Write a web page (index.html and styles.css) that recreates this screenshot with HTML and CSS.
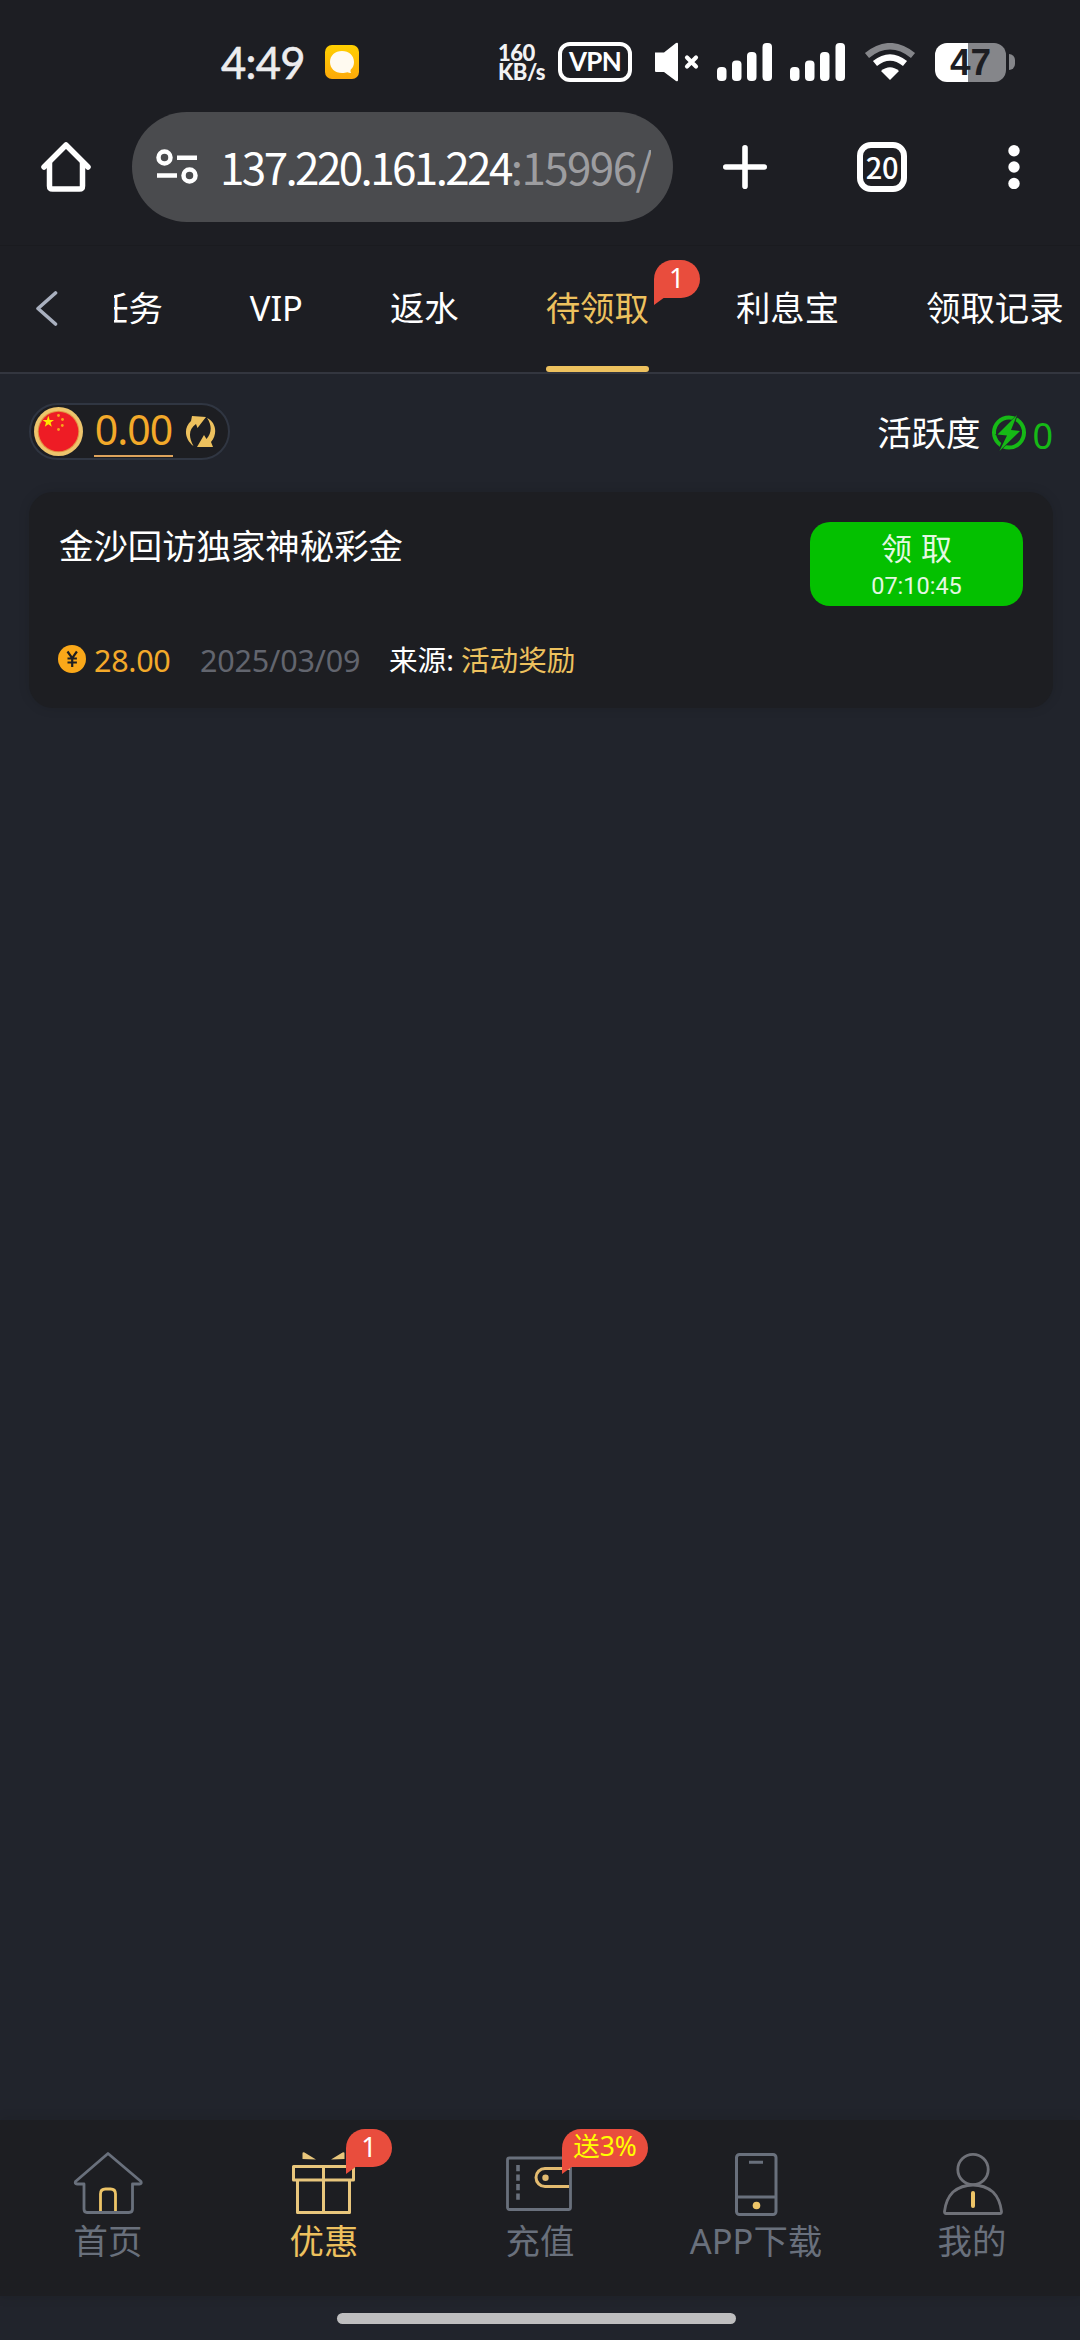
FILE: index.html
```html
<!DOCTYPE html>
<html lang="zh-CN">
<head>
<meta charset="utf-8">
<title>待领取</title>
<link rel="stylesheet" href="styles.css">
</head>
<body>
<div class="screen">
  <header class="status">
    <span class="clock">4:49</span>
    <svg class="msg" viewBox="0 0 34 34"><defs><linearGradient id="mg" x1="0" y1="0" x2="0" y2="1"><stop offset="0" stop-color="#ffd000"/><stop offset="1" stop-color="#fda90a"/></linearGradient></defs><rect width="34" height="34" rx="7" fill="url(#mg)"/><path d="M17 6C10 6 5 10.500 5 17s5 11 12 11c2 0 4-.2 5.500-.7 1.200.5 2.500.9 3.500.7-.6-1-.6-2.300-.2-3.400C28 22.500 29 20 29 17c0-6.500-5-11-12-11z" fill="#fffaf0"/></svg>
    <span class="speed"><span>160</span><span>KB/s</span></span>
    <span class="vpn">VPN</span>
    <svg class="mute" viewBox="0 0 46 40"><path d="M1 10.500h9L22 1q2-1 2 1v36q0 2-2 1L10 30H2q-1 0-1-1z" fill="#fff"/><path d="M33 15.500l9 9m0-9l-9 9" stroke="#fff" stroke-width="4.200" stroke-linecap="round"/></svg>
    <svg class="signal" viewBox="0 0 55 38" fill="#fff"><rect y="24" width="9.500" height="14" rx="4"/><rect x="15" y="17.500" width="9.500" height="20.500" rx="4"/><rect x="30" y="9" width="9.500" height="29" rx="4"/><rect x="45.500" width="9.500" height="38" rx="4"/></svg>
    <svg class="signal signal-2" viewBox="0 0 55 38" fill="#fff"><rect y="24" width="9.500" height="14" rx="4"/><rect x="15" y="17.500" width="9.500" height="20.500" rx="4"/><rect x="30" y="9" width="9.500" height="29" rx="4"/><rect x="45.500" width="9.500" height="38" rx="4"/></svg>
    <svg class="wifi" viewBox="0 0 52 38" fill="none"><path d="M3 12.500Q26-6 49 12.500" stroke="#85868a" stroke-width="6.500"/><path d="M11 20.500Q26 8.500 41 20.500" stroke="#fff" stroke-width="6.500"/><path d="M17 28Q26 20.500 35 28L26 37z" fill="#fff"/></svg>
    <span class="battery"><span class="battery-body">47</span><span class="battery-nub"></span></span>
  </header>

  <div class="browser">
    <svg class="home" viewBox="0 0 50 50" fill="none" stroke="#fff" stroke-width="5.500" stroke-linecap="round" stroke-linejoin="round"><path d="M3 25L25 3l22 22"/><path d="M8.500 21v23q0 3 3 3h27q3 0 3-3V21"/></svg>
    <div class="address">
      <svg class="tune" viewBox="0 0 42 36" fill="none" stroke="#fff" stroke-width="4.500"><circle cx="8.500" cy="8.500" r="6"/><path d="M21 8.700h20M1 26.500h20"/><circle cx="33.500" cy="26.500" r="6"/></svg>
      <span class="url">137.220.161.224<span class="port">:15996/</span></span>
    </div>
    <svg class="plus" viewBox="0 0 44 44"><path d="M22 2.800v38.400M2.800 22h38.400" stroke="#fff" stroke-width="5.600" stroke-linecap="round"/></svg>
    <span class="tabcount">20</span>
    <svg class="dots" viewBox="0 0 12 44" fill="#fff"><circle cx="6" cy="5.700" r="5.700"/><circle cx="6" cy="22" r="5.700"/><circle cx="6" cy="38.500" r="5.700"/></svg>
  </div>

  <nav class="tabs">
    <svg class="back" viewBox="0 0 22 35" fill="none" stroke="#a9b0bf" stroke-width="3.600" stroke-linecap="round" stroke-linejoin="round"><path d="M19.500 2L2 17.500 19.500 33"/></svg>
    <div class="tablist">
      <span class="tab">任务</span>
      <span class="tab">VIP</span>
      <span class="tab">返水</span>
      <span class="tab active">待领取<span class="bubble tab-bubble">1</span></span>
      <span class="tab">利息宝</span>
      <span class="tab">领取记录</span>
    </div>
  </nav>

  <main class="content">
    <div class="summary">
      <div class="balance">
        <svg class="flag" viewBox="0 0 49 49"><circle cx="24.500" cy="24.500" r="24.500" fill="#edc56d"/><circle cx="24.500" cy="24.500" r="20.800" fill="#e49142"/><circle cx="24.500" cy="24.500" r="19.800" fill="#ee1c25"/><path d="M14.300 8.800l1.400 4.100 4.300.1-3.400 2.600 1.200 4.200-3.500-2.500-3.500 2.500 1.200-4.200L8.600 13l4.300-.1z" fill="#ffe600"/><g fill="#f9a51b"><circle cx="24.500" cy="8.500" r="1.400"/><circle cx="28.500" cy="12.500" r="1.400"/><circle cx="28.300" cy="18.500" r="1.400"/><circle cx="24.500" cy="22.500" r="1.400"/></g></svg>
        <span class="amount">0.00</span>
        <svg class="refresh" viewBox="0 0 32 34" fill="#edc15e"><path d="M7 1l14 1-8.500 11-1.500-4C4 14 3 21 8.500 31 0 25-2 13 6 6z"/><path d="M22 3c9 4 11 16 4 24l2 5H12l7-12 2.500 4C27 18 27 10 22 3z"/></svg>
      </div>
      <div class="activity">
        <span>活跃度</span>
        <svg class="bolt" viewBox="0 0 36 36"><circle cx="18" cy="17.500" r="15" fill="none" stroke="#16b916" stroke-width="4"/><path d="M27-1L4 20l9 1-7 18L31 15l-9-1z" fill="#21242c"/><path d="M26 0L6.500 19.500l9.500 1L8.500 36 29 16 20 15z" fill="#16b916"/></svg>
        <span class="points">0</span>
      </div>
    </div>

    <article class="card">
      <div class="card-top">
        <h2 class="title">金沙回访独家神秘彩金</h2>
        <button class="claim"><span class="claim-text">领 取</span><span class="countdown">07:10:45</span></button>
      </div>
      <div class="meta">
        <svg class="yen" viewBox="0 0 28 28"><circle cx="14" cy="14" r="14" fill="#faa819"/><path d="M9.500 6.500l4.700 6.700 4.700-6.700M14.200 13v9M9.500 13.500h9.400M9.500 17.500h9.400" fill="none" stroke="#1d1e22" stroke-width="2.200"/></svg>
        <span class="bonus">28.00</span>
        <span class="date">2025/03/09</span>
        <span class="source">来源: </span><span class="kind">活动奖励</span>
      </div>
    </article>
  </main>

  <nav class="bottom">
    <a class="item">
      <svg class="icon" viewBox="0 0 72 72" fill="none" stroke="#69707c" stroke-width="2.800" stroke-linejoin="round"><path d="M36 6.500L3.500 34.500q-1 2.500 1.500 2.500h7v25q0 3.500 3 3.500h42q3.500 0 3.500-3.500V37h7q2.500 0 1.500-2.500z"/><path d="M28.500 64V47q0-5 5-5h5q5 0 5 5v17" stroke="#edc467"/></svg>
      <span>首页</span>
    </a>
    <a class="item on">
      <svg class="icon" viewBox="0 0 72 72" fill="none" stroke="#e8c67c" stroke-width="3" stroke-linejoin="round"><path d="M5.500 19.500h60V33h-60zM9.500 33h52v32.500h-52zM35.500 19.500v46"/><path d="M14.500 12V6.500q0-2 2-1L28 12.500zM56.500 12V6.500q0-2-2-1L43 12.500z" fill="#e8c67c" stroke="none"/></svg>
      <span>优惠</span>
      <span class="bubble nav-bubble">1</span>
    </a>
    <a class="item">
      <svg class="icon" viewBox="0 0 72 72" fill="none" stroke="#69707c" stroke-width="2.800"><rect x="3.500" y="11" width="63" height="51.500" rx="2"/><path d="M14 18v36" stroke-width="3.600" stroke-dasharray="6.300 3.200"/><path d="M65 39.500H41a9 9 0 0 1 0-18h25" stroke="#e3bb70" stroke-width="3"/><circle cx="41.500" cy="30.700" r="3.200" fill="#e3bb70" stroke="none"/></svg>
      <span>充值</span>
      <span class="bubble nav-bubble promo">送3%</span>
    </a>
    <a class="item">
      <svg class="icon" viewBox="0 0 72 72" fill="none" stroke="#69707c" stroke-width="3"><rect x="16.500" y="7.500" width="39.500" height="60" rx="3"/><path d="M17 50h39M29 15.200h14"/><circle cx="36.500" cy="58.500" r="3.800" fill="#edc467" stroke="none"/></svg>
      <span>APP下载</span>
    </a>
    <a class="item">
      <svg class="icon" viewBox="0 0 72 72" fill="none" stroke="#6f7178" stroke-width="2.800" stroke-linejoin="round"><circle cx="37" cy="22.500" r="15.200"/><path d="M10 66.500q-1.500 0-1.500-2Q10 52 17 45q8.500-7 20-7t20 7q7 7 8.500 19.500 0 2-1.500 2z"/><path d="M37 46v13" stroke="#edc467" stroke-width="4" stroke-linecap="round"/></svg>
      <span>我的</span>
    </a>
  </nav>
  <footer class="gesture"><span class="handle"></span></footer>
</div>
</body>
</html>
```
FILE: styles.css
```css
* { box-sizing: border-box; }
body { margin: 0; background: #21242c; }
svg { display: block; flex: none; }
.screen {
  width: 1080px; height: 2340px; overflow: hidden;
  display: flex; flex-direction: column;
  background: #21242c; color: #fff;
  font-family: "Noto Sans", "Noto Sans CJK SC", sans-serif;
  font-size: 34.4px; line-height: 44px; white-space: nowrap;
}

/* status bar */
.status {
  flex: none; height: 112px; padding: 12px 0 0 221px;
  display: flex; align-items: center; background: #1d1e23;
}
.clock { width: 104px; font-family: Lato, sans-serif; font-size: 43.5px; letter-spacing: -.7px; color: #ececee; -webkit-text-stroke: .6px #ececee; }
.msg { width: 34px; height: 34px; }
.speed {
  width: 60px; margin-left: 139px; display: flex; flex-direction: column;
  font-family: Lato, sans-serif; font-weight: 900; font-size: 22px; line-height: 19px; letter-spacing: -.5px; color: #f2f2f3;
}
.vpn {
  width: 74px; height: 40px; border: 4px solid #fff; border-radius: 12px;
  font: 700 26px/31px Lato, sans-serif; text-align: center; letter-spacing: -.8px;
}
.mute { width: 46px; height: 40px; margin-left: 22px; }
.signal { width: 55px; height: 38px; margin-left: 17px; }
.signal-2 { margin-left: 18px; }
.wifi { width: 52px; height: 38px; margin-left: 19px; }
.battery { display: flex; align-items: center; gap: 3px; margin-left: 19px; }
.battery-body {
  width: 71px; height: 39px; border-radius: 12px;
  background: linear-gradient(90deg, #fff 47%, #85868a 47%);
  color: #1d1e23; font: 700 37px/39px "Liberation Sans", sans-serif; text-align: center;
}
.battery-nub { width: 6px; height: 16px; border-radius: 0 8px 8px 0; background: #85868a; }

/* browser toolbar */
.browser { flex: none; height: 133px; padding-left: 41px; display: flex; align-items: flex-start; background: #1d1e23; }
.home { width: 50px; height: 50px; margin-top: 30px; }
.address {
  width: 541px; height: 110px; margin-left: 41px; padding-left: 24px; border-radius: 55px;
  background: #4a4b4e; display: flex; align-items: center;
}
.tune { width: 42px; height: 36px; }
.url { width: 431px; margin: -3px 0 0 22px; overflow: hidden; font-family: "Noto Sans CJK SC", sans-serif; font-size: 44px; line-height: 66px; letter-spacing: -2.600px; }
.port { color: #9d9da0; letter-spacing: -1.600px; }
.plus { width: 44px; height: 44px; margin: 33px 0 0 50px; }
.tabcount {
  width: 50px; height: 50px; margin: 30px 0 0 90px; border: 6px solid #fff; border-radius: 14px;
  font: 500 29px/36px "Noto Sans CJK SC", sans-serif; text-align: center; letter-spacing: -.3px;
}
.dots { width: 12px; height: 44px; margin: 33px 0 0 101px; }

/* category tabs */
.tabs { flex: none; height: 129px; padding-left: 36px; display: flex; align-items: center; background: #1d1e23; border-bottom: 2px solid #33363f; border-top: 1px solid #1a1b1f; }
.back { width: 22px; height: 35px; margin-top: -2px; }
.tablist { flex: 1; height: 100%; margin-left: 56px; display: flex; gap: 87px; overflow: hidden; }
.tab { flex: none; position: relative; line-height: 123px; }
.tab:first-child { margin-left: -20px; }
.active { color: #edc15e; }
.active::after { content: ""; position: absolute; left: 0; right: 0; bottom: 0; height: 6px; border-radius: 3px; background: #edc15e; }

/* speech-bubble counters */
.bubble {
  position: absolute; width: 46px; height: 38px; border-radius: 19px 19px 19px 0;
  background: #e94d3d; color: #fff; text-align: center;
  font-size: 27px; line-height: 36px;
}
.bubble::after { content: ""; position: absolute; left: 0; top: 37px; border-style: solid; border-width: 8px 11px 0 0; border-color: #e94d3d transparent; }
.tab-bubble { left: 108px; top: 14px; }
.nav-bubble { left: 130px; top: 9px; }
.promo { width: 86px; color: #ff0; font-size: 26.500px; line-height: 34px; }

/* balance row */
.content { flex: 1; padding: 29px 27px 0 29px; }
.summary { display: flex; justify-content: space-between; align-items: center; }
.balance {
  width: 201px; height: 57px; padding-left: 3px; border: 2px solid #303642; border-radius: 29px;
  background: #1d1e22; display: flex; align-items: center;
}
.flag { width: 49px; height: 49px; }
.amount {
  width: 79px; height: 51px; margin-left: 11px; border-bottom: 2px solid #dda35c;
  color: #f3a92a; font-size: 41px; line-height: 47px; text-align: center; letter-spacing: -1px;
}
.refresh { width: 32px; height: 34px; margin-left: 12px; }
.activity { display: flex; align-items: center; padding-top: 3px; }
.bolt { width: 36px; height: 36px; margin-left: 11px; }
.points { margin: 5px 0 0 5px; color: #16b916; font-size: 36px; line-height: 44px; }

/* reward card */
.card {
  height: 216px; margin-top: 32px; padding: 30px; border-radius: 24px;
  background: #1d1e22; box-shadow: 0 0 12px rgba(0, 0, 0, .12);
  display: flex; flex-direction: column; justify-content: space-between;
}
.card-top { display: flex; justify-content: space-between; align-items: flex-start; }
.title { margin: 2px 0 0; font-size: 34.400px; font-weight: 400; line-height: 44px; }
.claim {
  width: 213px; height: 84px; padding: 7px 0 0; border: 0; border-radius: 20px; background: #04c000; color: #e4f8e2;
  display: flex; flex-direction: column; align-items: center; font-family: inherit;
}
.claim-text { font-size: 31px; line-height: 39px; word-spacing: 1px; }
.countdown { font: 400 23.500px/37px Roboto, sans-serif; }
.meta { display: flex; align-items: center; height: 36px; font-size: 28.600px; line-height: 36px; }
.yen { width: 28px; height: 28px; margin: -2px 8px 0 -1px; }
.bonus { width: 106px; color: #f3a92a; font-size: 30.500px; letter-spacing: -.3px; }
.date { width: 189px; color: #62656e; font-size: 30.500px; letter-spacing: -.2px; }
.source { width: 72px; }
.kind { color: #edc15e; }

/* bottom navigation */
.bottom { flex: none; height: 176px; display: grid; grid-template-columns: repeat(5, 1fr); background: #1d1e22; box-shadow: 0 0 12px rgba(0, 0, 0, .12); }
.item { position: relative; padding-top: 27px; display: flex; flex-direction: column; align-items: center; color: #69707c; }
.icon { width: 72px; height: 72px; }
.on { color: #edc15e; }
.gesture { flex: none; height: 44px; padding: 17px 7px 0 0; display: flex; justify-content: center; }
.handle { width: 399px; height: 11px; border-radius: 6px; background: #bebebf; }
```
